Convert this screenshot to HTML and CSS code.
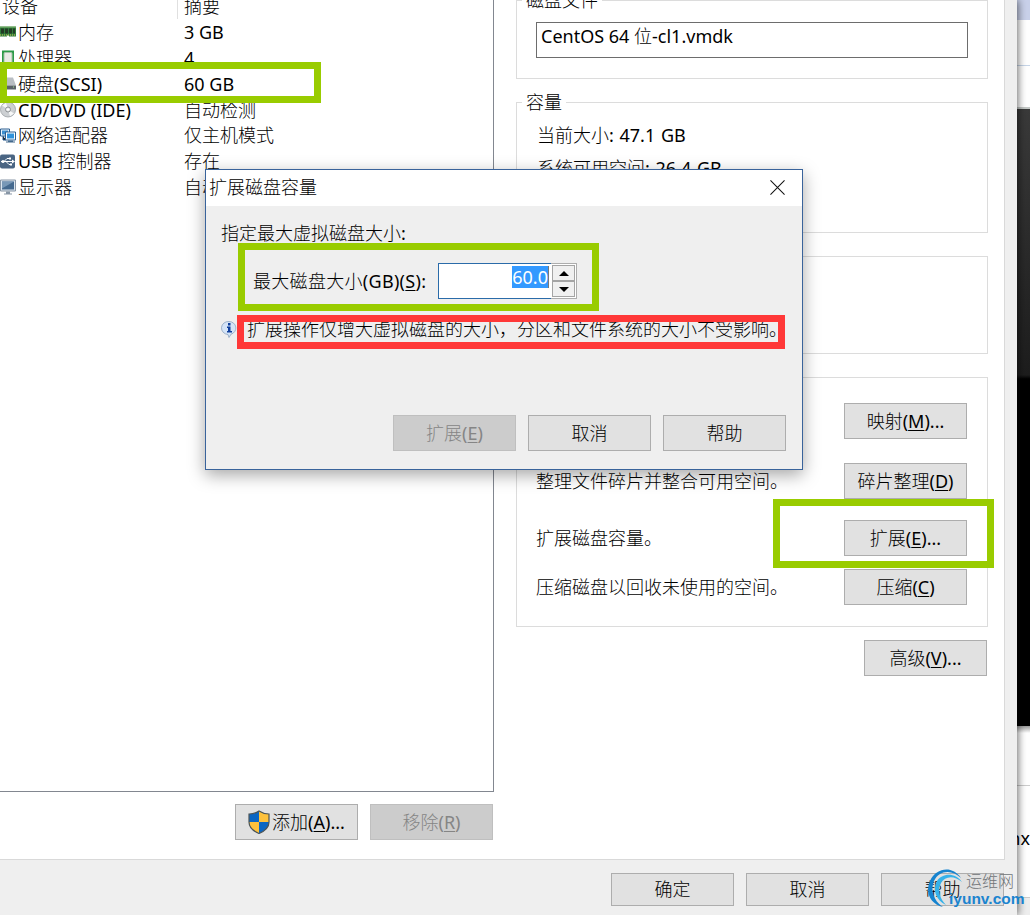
FILE: index.html
```html
<!DOCTYPE html>
<html lang="zh-CN">

<head>
    <meta charset="UTF-8">
    <meta name="viewport" content="width=device-width, initial-scale=1.0">
    <title>虚拟机设置</title>
    <link rel="stylesheet" href="styles.css">
</head>

<body>
    <div class="desktop">
        <div class="window">
            <div class="page">
                <div class="devices">
                    <div class="device-list">
                        <div class="row head"><span class="name">设备</span><span>摘要</span></div>
                        <div class="row">
                            <svg class="icon" viewBox="0 0 16 16"><path fill="#2f7d3b" d="M0 3h16v10H9v-1H7v1H0z"/><path fill="#8fbf7c" d="M0 3h16v1H0z"/><path fill="#243b25" d="M1 5h3v5H1zM5 5h3v5H5zM9 5h3v5H9zM13 5h2v5h-2z"/><path stroke="#d9c65a" stroke-dasharray="1 1" d="M0 11.500h16"/></svg>
                            <span class="name">内存</span><span>3 GB</span>
                        </div>
                        <div class="row">
                            <svg class="icon" viewBox="0 0 16 16"><path fill="#2c9a48" d="M2 1h12v15H2z"/><rect x="4" y="3" width="8" height="12" rx="1" fill="#e9eae6" stroke="#a3c3a6"/></svg>
                            <span class="name">处理器</span><span>4</span>
                        </div>
                        <div class="row">
                            <svg class="icon" viewBox="0 0 16 16"><path fill="#b9bec3" d="M3 2h10l3 8H0z"/><path fill="#5b6269" d="M0 10h16v4H0z"/><path fill="#9fe08a" d="M13 11h1v1h-1z"/></svg>
                            <span class="name">硬盘(SCSI)</span><span>60 GB</span>
                        </div>
                        <div class="row">
                            <svg class="icon" viewBox="0 0 16 16"><circle cx="8" cy="8" r="7.500" fill="#cdd0d3" stroke="#9b9fa3" stroke-width=".8"/><path fill="#f7f8f8" d="M8 8 2 4l4-2.800zM8 8l6 4-4 2.800z"/><circle cx="8" cy="8" r="2.500" fill="#eceded" stroke="#8d9194"/><circle cx="8" cy="8" r="1" fill="#fff"/></svg>
                            <span class="name">CD/DVD (IDE)</span><span>自动检测</span>
                        </div>
                        <div class="row">
                            <svg class="icon" viewBox="0 0 16 16"><path fill="#eaf5fc" stroke="#2c5f91" d="M.5 1.500h9v7h-9z"/><path fill="#3c8fd0" d="M2 3h6v4H2z"/><path stroke="#2c5f91" d="M3 8.500v4h3"/><path fill="#fff" stroke="#2c5f91" d="M5.500 4.500h10v8h-10z"/><path fill="#2f92db" d="M7 6h7v5H7z"/><path fill="#42688c" d="M8 13h5v1h2v1H6v-1h2z"/></svg>
                            <span class="name">网络适配器</span><span>仅主机模式</span>
                        </div>
                        <div class="row">
                            <svg class="icon" viewBox="0 0 16 16"><rect y="1" width="15" height="14" rx="2" fill="#4a6583"/><path fill="none" stroke="#fff" d="M1 8h12M4 8l3-3h2M6 8l3 3h2"/><path fill="#fff" d="m12 6 3 2-3 2zM9 4h2v2H9zM10 10h2v2h-2z"/><circle cx="3" cy="8" r="1.500" fill="#fff"/></svg>
                            <span class="name">USB 控制器</span><span>存在</span>
                        </div>
                        <div class="row">
                            <svg class="icon" viewBox="0 0 16 16"><path fill="#dbe5ef" stroke="#8795a5" d="M.5.5h15v11H.5z"/><path fill="#44698f" d="M2 2h12v8H2z"/><path fill="#7898b7" d="M2 2h12L2 9z"/><path fill="#8795a5" d="M6 12h4v2h2v1H4v-1h2z"/></svg>
                            <span class="name">显示器</span><span>自动检测</span>
                        </div>
                    </div>
                    <div class="device-buttons">
                        <button class="btn">
                            <svg class="shield" viewBox="0 0 22 24"><path fill="#0b66c3" d="M11 1c3 2 6 3 10 3v8c0 5-4 9-10 11.500C5 21 1 17 1 12V4c4 0 7-1 10-3z"/><path fill="#fdc13c" d="M11 1c3 2 6 3 10 3v8H11zM1 12h10v11.500C5 21 1 17 1 12z"/><path fill="none" stroke="#4d5557" stroke-width="1.200" d="M11 1c3 2 6 3 10 3v8c0 5-4 9-10 11.500C5 21 1 17 1 12V4c4 0 7-1 10-3z"/></svg>添加(<u>A</u>)...
                        </button>
                        <button class="btn" disabled>移除(<u>R</u>)</button>
                    </div>
                </div>

                <div class="settings">
                    <div class="group file">
                        <span class="legend">磁盘文件</span>
                        <div class="field">CentOS 64 位-cl1.vmdk</div>
                    </div>
                    <div class="group capacity">
                        <span class="legend">容量</span>
                        <p>当前大小: 47.1 GB</p>
                        <p>系统可用空间: 26.4 GB</p>
                    </div>
                    <div class="group info"></div>
                    <div class="group tools">
                        <div class="tool"><span></span><button class="btn">映射(<u>M</u>)...</button></div>
                        <div class="tool defrag"><span>整理文件碎片并整合可用空间。</span><button class="btn">碎片整理(<u>D</u>)</button></div>
                        <div class="tool expand"><span>扩展磁盘容量。</span><button class="btn">扩展(<u>E</u>)...</button></div>
                        <div class="tool compact"><span>压缩磁盘以回收未使用的空间。</span><button class="btn">压缩(<u>C</u>)</button></div>
                    </div>
                    <button class="btn advanced">高级(<u>V</u>)...</button>
                </div>
            </div>
            <div class="footer">
                <button class="btn">确定</button>
                <button class="btn">取消</button>
                <button class="btn">帮助</button>
            </div>
        </div>

        <div class="backdrop">
            <div class="strip-title"></div>
            <div class="strip-bar"></div>
            <div class="strip-gap"></div>
            <div class="strip-screen"></div>
            <div class="strip-tabs"></div>
            <div class="strip-text"><span>nx</span></div>
            <div class="strip-end"></div>
        </div>

        <div class="dialog">
            <div class="titlebar">
                <span>扩展磁盘容量</span>
                <svg class="close" viewBox="0 0 16 16"><path stroke="#111" stroke-width="1.100" d="m.5.5 15 15M15.500.5l-15 15"/></svg>
            </div>
            <div class="dialog-body">
                <p class="prompt">指定最大虚拟磁盘大小:</p>
                <div class="size">
                    <span class="size-label">最大磁盘大小(GB)(<u>S</u>):</span>
                    <div class="spin-input"><span>60.0</span></div>
                    <div class="spinner">
                        <i><svg viewBox="0 0 10 5"><path d="m5 0 5 5H0z"/></svg></i>
                        <i><svg viewBox="0 0 10 5"><path d="m0 0h10L5 5z"/></svg></i>
                    </div>
                </div>
                <div class="note">
                    <svg class="note-icon" viewBox="0 0 16 17"><path fill="#d5e4f7" stroke="#8ba3bf" stroke-width=".8" d="M8 .5a7 6.500 0 0 1 2 12.700L8 16.500l-1-3A7 6.500 0 0 1 8 .5z"/><path fill="#103f9c" d="M7 2h2.500v2.500H7zM6 5.500h3.500V10H11v1.500H6V10h1V7H6z"/></svg>
                    <span>扩展操作仅增大虚拟磁盘的大小，分区和文件系统的大小不受影响。</span>
                </div>
                <div class="dialog-buttons">
                    <button class="btn" disabled>扩展(<u>E</u>)</button>
                    <button class="btn">取消</button>
                    <button class="btn">帮助</button>
                </div>
            </div>
        </div>

        <div class="mark mark-disk"></div>
        <div class="mark mark-size"></div>
        <div class="mark mark-note"></div>
        <div class="mark mark-expand"></div>

        <div class="watermark">
            <svg viewBox="0 0 38 40"><path fill="#1583cf" d="M16 39C3 36-2 24 3 13 9 0 25-3 34 10 25 1 12 2 7 13 3 23 7 33 16 39z"/><path fill="#35b2ea" d="M19 37C9 32 5 22 10 13c5-8 18-9 25 1-8-7-17-6-21 1-4 7-1 16 5 22z"/></svg>
            <div class="watermark-text"><b>运维网</b><strong>iyunv.com</strong></div>
        </div>
    </div>
</body>

</html>
```
FILE: styles.css
```css
* {
    box-sizing: border-box;
}

body {
    margin: 0;
    font-family: "Noto Sans", "Noto Sans CJK SC Light", "Noto Sans CJK SC DemiLight", "Noto Sans CJK SC", sans-serif;
    font-size: 18px;
    line-height: 26px;
    color: #000;
}

p {
    margin: 0;
}

svg {
    display: block;
}

u {
    text-underline-offset: 2px;
    text-decoration-thickness: 1px;
}

.desktop {
    position: relative;
    display: flex;
    width: 1030px;
    height: 915px;
    overflow: hidden;
}

.window {
    flex: none;
    width: 1017px;
    background: #efefef;
    box-shadow: 1px 0 8px rgba(0, 0, 0, 0.6);
    z-index: 1;
}

.page {
    display: flex;
    width: 1005px;
    height: 860px;
    background: #fff;
    border-right: 1px solid #d9d9d9;
    border-bottom: 1px solid #d9d9d9;
}

.btn {
    display: flex;
    align-items: center;
    justify-content: center;
    flex: none;
    width: 123px;
    height: 36px;
    padding: 0 0 1px;
    background: #e1e1e1;
    border: 1px solid #adadad;
    color: #000;
    font: inherit;
    white-space: nowrap;
}

.btn:disabled {
    background: #cccccc;
    border-color: #bfbfbf;
    color: #858585;
}

/* device list */
.devices {
    width: 494px;
}

.device-list {
    height: 792px;
    border-right: 1px solid #828790;
    border-bottom: 1px solid #828790;
    overflow: hidden;
}

.row {
    display: flex;
    align-items: center;
    height: 25.9px;
    white-space: nowrap;
}

.row .icon {
    flex: none;
    width: 16px;
    height: 17px;
}

.row .name {
    width: 168px;
    padding-left: 2px;
}

.row.head {
    margin-top: -7px;
}

.row.head .name {
    width: 178px;
    margin-right: 6px;
    border-right: 1px solid #e0e0e0;
}

.device-buttons {
    display: flex;
    justify-content: flex-end;
    gap: 12px;
    padding: 12px 1px 0 0;
}

.shield {
    width: 22px;
    height: 24px;
    margin-right: 2px;
}

/* settings */
.settings {
    width: 494px;
    padding-left: 22px;
}

.group {
    width: 472px;
    padding: 0 20px;
    border: 1px solid #dcdcdc;
}

.legend {
    display: block;
    width: max-content;
    margin: -14px 0 0 -15px;
    padding: 0 4px;
    background: #fff;
}

.file {
    height: 79px;
}

.field {
    width: 432px;
    height: 36px;
    margin: 9px 0 0 -1px;
    padding: 0 4px;
    border: 1px solid #6d6d6d;
}

.capacity {
    height: 131px;
    margin-top: 23px;
}

.capacity p {
    margin-top: 7px;
    word-spacing: 1px;
}

.info {
    height: 98px;
    margin-top: 23px;
}

.tools {
    height: 250px;
    margin-top: 23px;
    padding: 25px 20px 0 19px;
}

.tool {
    display: flex;
    align-items: center;
    justify-content: space-between;
    height: 36px;
}

.tool span {
    margin-top: -1px;
}

.defrag {
    margin-top: 24px;
}

.expand {
    margin-top: 21px;
}

.compact {
    margin-top: 13px;
}

.advanced {
    margin: 13px 0 0 348px;
}

.footer {
    display: flex;
    justify-content: flex-end;
    gap: 12px;
    padding: 13px 13px 0 0;
}

.footer .btn {
    height: 33px;
}

/* window behind */
.backdrop {
    width: 13px;
    background: #fff;
}

.strip-title {
    height: 20px;
    background: #c9d1ea;
}

.strip-bar {
    height: 46px;
    border-bottom: 1px solid #c6d5e8;
}

.strip-gap {
    height: 43px;
    border-bottom: 2px solid #c4c8c6;
}

.strip-screen {
    height: 617px;
    background: linear-gradient(#3a3a3a, #1d1d1d 266px, #000 270px);
}

.strip-tabs {
    height: 60px;
    background: linear-gradient(#999, #fff 7px);
    border-bottom: 1px solid #ccc;
}

.strip-text {
    display: flex;
    justify-content: flex-end;
    height: 112px;
    padding-top: 39px;
    border-bottom: 1px solid #ccc;
}

.strip-end {
    height: 17px;
    background: #eee;
}

/* expand dialog */
.dialog {
    position: absolute;
    left: 205px;
    top: 169px;
    z-index: 2;
    width: 598px;
    height: 301px;
    background: #efefef;
    border: 1px solid #39639b;
    box-shadow: 0 5px 16px rgba(0, 0, 0, 0.35);
}

.titlebar {
    display: flex;
    align-items: center;
    justify-content: space-between;
    height: 36px;
    padding: 0 17px 2px 3px;
    background: #fff;
}

.close {
    width: 15px;
    height: 15px;
}

.dialog-body {
    padding: 14px 16px 0 15px;
}

.size {
    display: flex;
    align-items: center;
    height: 36px;
    margin-top: 17px;
    padding-left: 32px;
}

.size-label {
    width: 185px;
    letter-spacing: 0.3px;
}

.spin-input {
    display: flex;
    justify-content: flex-end;
    width: 113px;
    height: 36px;
    padding: 2px 2px 0 0;
    background: #fff;
    border: 1px solid #2a6ba9;
    border-right: none;
}

.spin-input span {
    height: 22px;
    line-height: 23px;
    background: #3399ff;
    border-right: 1px solid #777;
    color: #fff;
}

.spinner {
    width: 26px;
    height: 36px;
    padding: 1px;
    background: #fff;
    border: 1px solid #adadad;
    border-left: none;
}

.spinner i {
    display: flex;
    align-items: center;
    justify-content: center;
    height: 16px;
    background: #f0f0f0;
    border: 1px solid #a5a5a5;
}

.spinner svg {
    width: 10px;
    height: 5px;
}

.note {
    display: flex;
    align-items: center;
    margin-top: 17px;
    white-space: nowrap;
}

.note-icon {
    flex: none;
    width: 16px;
    height: 17px;
    margin-right: 10px;
}

.dialog-buttons {
    display: flex;
    justify-content: flex-end;
    gap: 12px;
    margin-top: 73px;
}

/* highlight frames */
.mark {
    position: absolute;
    z-index: 3;
    border: 7px solid #99cc00;
}

.mark-disk {
    left: 0;
    top: 62px;
    width: 321px;
    height: 41px;
}

.mark-size {
    left: 238px;
    top: 243px;
    width: 361px;
    height: 68px;
}

.mark-note {
    left: 237px;
    top: 315px;
    width: 548px;
    height: 34px;
    border-color: #ff3838;
}

.mark-expand {
    left: 773px;
    top: 499px;
    width: 221px;
    height: 69px;
}

.watermark {
    position: absolute;
    z-index: 4;
    left: 927px;
    top: 868px;
    display: flex;
}

.watermark svg {
    width: 38px;
    height: 40px;
}

.watermark-text {
    display: flex;
    flex-direction: column;
    margin: 4px 0 0 -16px;
    line-height: 18px;
}

.watermark-text b {
    margin-left: 17px;
    color: #707478;
    font-size: 16px;
    font-weight: 500;
}

.watermark-text strong {
    color: #1b84cf;
    font-family: "Liberation Sans", sans-serif;
    font-size: 15.500px;
}
```
